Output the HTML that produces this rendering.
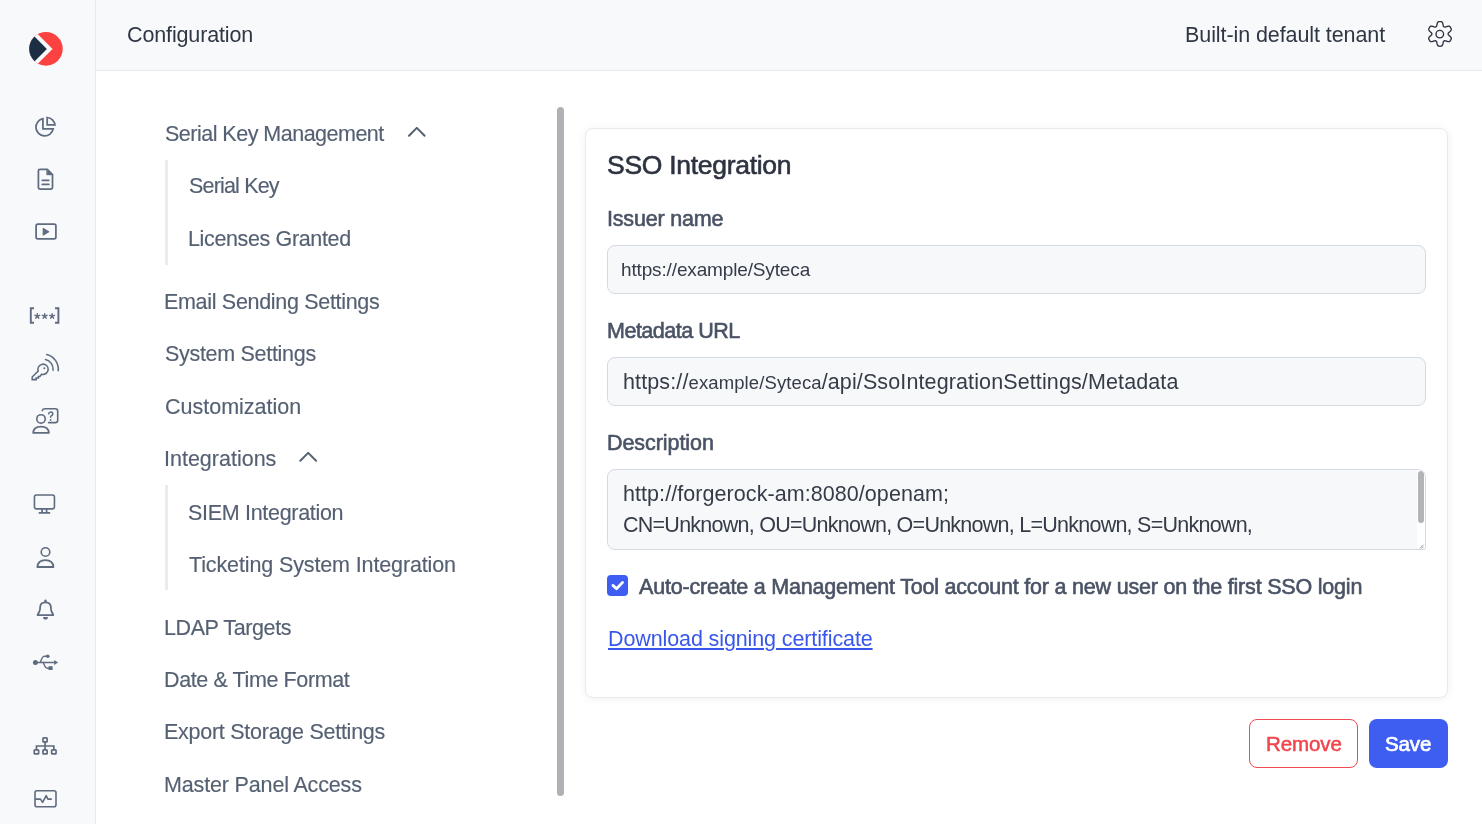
<!DOCTYPE html>
<html>
<head>
<meta charset="utf-8">
<style>
*{box-sizing:border-box;margin:0;padding:0}
html,body{width:1482px;height:824px;overflow:hidden;background:#fff;font-family:"Liberation Sans",sans-serif}
.t{position:absolute;white-space:nowrap;will-change:transform}
#side{position:absolute;left:0;top:0;width:96px;height:824px;background:#f8f9fb;border-right:1px solid #e6e9ee}
#head{position:absolute;left:96px;top:0;width:1386px;height:71px;background:#f8f9fb;border-bottom:1px solid #e6e9ee}
.ht{color:#2f3744}
.nav{color:#556072;-webkit-text-stroke:0.15px #556072}
.sub{position:absolute;left:165px;width:3px;background:#e8ebf1}
#scroll{position:absolute;left:557px;top:107px;width:7px;height:689px;border-radius:3.5px;background:#b0b1b5}
#card{position:absolute;left:585px;top:128px;width:863px;height:570px;border:1px solid #e8eaf0;border-radius:8px;background:#fff;box-shadow:0 1px 10px rgba(30,40,60,.06)}
.ttl{color:#2d3340;-webkit-text-stroke:0.6px #2d3340}
.lbl{color:#4a5365;-webkit-text-stroke:0.6px #4a5365}
.inp{position:absolute;left:607px;width:819px;border:1px solid #d5dae2;border-radius:8px;background:#f7f8fa}
.itx{color:#353c48}
.itx2{color:#353c48}
.sm{font-size:0.86em}
.lnk{color:#3857ea;text-decoration:underline;text-decoration-thickness:1.5px;text-underline-offset:2px}
.btn{position:absolute;top:719px;height:49px;border-radius:8px}
.brm{color:#f0444c;-webkit-text-stroke:0.5px #f0444c}
.bsv{color:#fff;-webkit-text-stroke:0.7px #fff}
svg{position:absolute;overflow:visible}
</style>
</head>
<body>
<div id="side"></div>
<div id="head"></div>
<div class="sub" style="top:160px;height:105px"></div>
<div class="sub" style="top:485px;height:105px"></div>
<div id="scroll"></div>
<div id="card"></div>
<div class="inp" style="top:245px;height:49px"></div>
<div class="inp" style="top:357px;height:49px"></div>
<div class="inp" style="top:469px;height:81px;overflow:hidden;border-bottom-right-radius:2px"><div style="position:absolute;right:0;top:0;width:8px;height:79px;background:#fff"></div><div style="position:absolute;right:1px;top:1px;width:6px;height:52px;border-radius:3px;background:#b3b4b8"></div></div>
<svg width="1482" height="824" style="left:0;top:0;z-index:3"><path d="M1423.5 544.8 L1419.8 548.5 M1423.5 546.8 L1421.8 548.5" stroke="#777" stroke-width="0.8"/></svg>
<div style="position:absolute;left:607px;top:575px;width:21px;height:21px;border-radius:4px;background:#3d5ef1"></div>
<div class="btn" style="left:1249px;width:109px;border:1px solid #f04a52;background:#fff"></div>
<div class="btn" style="left:1369px;width:79px;background:#3d5ef1"></div>
<svg width="1482" height="824" style="left:0;top:0;z-index:2" viewBox="0 0 1482 824">
<clipPath id="lc"><circle cx="45.95" cy="48.85" r="16.8"/></clipPath>
<g clip-path="url(#lc)">
<rect x="28" y="31" width="36" height="36" fill="#fc4141"/>
<polygon points="52.6,48.9 36.9,33.2 20,33.2 20,64.6 36.9,64.6" fill="#f8f9fb"/>
<polygon points="46.9,48.9 29,31 20,31 20,67 29,67" fill="#1b2e44"/>
</g>
<g fill="none" stroke="#5f6b7f" stroke-width="1.75" stroke-linejoin="round" stroke-linecap="round"><path d="M42.9 118.7 V128.9 H53.2 A8.7 8.7 0 1 1 42.9 118.7 Z" stroke-linejoin="miter" stroke-linecap="butt"/><path d="M47.2 117.5 V124.9 H55 A8.5 8.5 0 0 0 47.2 117.5 Z" stroke-linejoin="miter" stroke-linecap="butt"/><path d="M47.3 169.4 H40 Q38.4 169.4 38.4 171 V187.4 Q38.4 189 40 189 H50.9 Q52.5 189 52.5 187.4 V174.6 Z"/><path d="M47.2 169.2 L52.7 174.7 H47.2 Z" fill="#5f6b7f" stroke-width="1"/><path d="M42.3 180.3 H48.8 M42.3 184.4 H48.8"/><rect x="36.1" y="224" width="19.8" height="14.8" rx="1.8"/><path d="M43.2 228.4 L48.7 231.7 L43.2 235 Z" fill="#5f6b7f" stroke-width="1.1"/><path d="M34 308.2 H30.8 V322.8 H34 M55 308.2 H58.4 V322.8 H55" stroke-width="1.9" stroke-linecap="butt" stroke-linejoin="miter"/></g>
<path d="M37.30 316.10 L37.30 313.60 M37.30 316.10 L39.68 315.33 M37.30 316.10 L38.77 318.12 M37.30 316.10 L35.83 318.12 M37.30 316.10 L34.92 315.33 " stroke="#5f6b7f" stroke-width="1.45" stroke-linecap="round" fill="none"/>
<path d="M44.70 316.10 L44.70 313.60 M44.70 316.10 L47.08 315.33 M44.70 316.10 L46.17 318.12 M44.70 316.10 L43.23 318.12 M44.70 316.10 L42.32 315.33 " stroke="#5f6b7f" stroke-width="1.45" stroke-linecap="round" fill="none"/>
<path d="M52.10 316.10 L52.10 313.60 M52.10 316.10 L54.48 315.33 M52.10 316.10 L53.57 318.12 M52.10 316.10 L50.63 318.12 M52.10 316.10 L49.72 315.33 " stroke="#5f6b7f" stroke-width="1.45" stroke-linecap="round" fill="none"/>
<g fill="none" stroke="#5f6b7f" stroke-width="1.6" stroke-linejoin="round" stroke-linecap="round"><path d="M46.74 354.45 A15.25 15.25 0 0 1 58.24 370.58"/><path d="M45.49 359.45 A10.1 10.1 0 0 1 53.11 370.13"/><path d="M41.6 374.2 A5.15 5.15 0 1 0 38.2 371.0 L32.2 377.0 V379.6 H36.2 V377.9 H38.4 V376.4 H39.9 Z" stroke-linejoin="miter" stroke-width="1.55"/><circle cx="44.3" cy="368.2" r="1" fill="#5f6b7f" stroke="none"/><circle cx="41" cy="418.9" r="4.2"/><path d="M33.2 432.8 Q33.6 426.6 41 426.6 Q48.4 426.6 48.9 432.8 Z" stroke-width="1.8"/><path d="M42.3 410.6 Q42.9 408.8 45 408.8 H55.2 Q57.7 408.8 57.7 411.3 V420.2 Q57.7 422.6 55.2 422.6 H48.5"/><path d="M48.6 413.8 Q48.9 411.9 50.8 411.9 Q52.8 411.9 52.8 413.8 Q52.8 415.2 51.3 415.9 Q50.6 416.3 50.6 417.3" stroke-width="1.5"/><circle cx="50.6" cy="420" r="0.9" fill="#5f6b7f" stroke="none"/><rect x="34.45" y="495.05" width="20" height="13.8" rx="2"/><path d="M42.1 509 V512.5 M46.6 509 V512.5 M39.4 512.9 H49.5" stroke-width="1.7"/><circle cx="45.5" cy="552" r="4.3"/><path d="M37.4 567 Q37.8 560.1 45.4 560.1 Q53 560.1 53.4 567 Z" stroke-width="1.8"/><path d="M37.5 615 H53.3 L51.6 611.5 Q50.9 610 50.9 608 V607.5 Q50.9 602.3 45.5 602.3 Q40.1 602.3 40.1 607.5 V608 Q40.1 610 39.4 611.5 Z" stroke-width="1.75"/><path d="M45.5 600.8 V601.8" stroke-width="2.4"/><path d="M43.1 617.0 H47.9 A2.4 2.6 0 0 1 43.1 617.0 Z" fill="#5f6b7f" stroke="none"/><circle cx="35.4" cy="662.4" r="2.5" fill="#5f6b7f" stroke="none"/><path d="M36 662.4 H55" stroke-width="1.45"/><path d="M54.2 659.9 L58.1 662.4 L54.2 664.9 Z" fill="#5f6b7f" stroke="none"/><path d="M40.5 662.3 Q42.2 656.3 44.4 656.3 H47.5" stroke-width="1.45"/><circle cx="47.8" cy="656.3" r="1.8" fill="#5f6b7f" stroke="none"/><path d="M43.3 662.5 Q45.2 668.2 47.5 668.2 H49" stroke-width="1.45"/><rect x="48.6" y="666.2" width="4" height="3.8" fill="#5f6b7f" stroke="none"/><g stroke-width="1.7" stroke-linejoin="miter"><rect x="42.95" y="737.95" width="4.2" height="4.0" rx="0.7"/><rect x="34.25" y="749.85" width="4.4" height="4.1" rx="0.7"/><rect x="42.95" y="749.85" width="4.2" height="4.1" rx="0.7"/><rect x="51.65" y="749.85" width="4.4" height="4.1" rx="0.7"/><path d="M45.05 742 V749.85 M36.45 749.85 V746 H53.85 V749.85" stroke-linecap="butt"/></g><rect x="35" y="790.8" width="21" height="15.9" rx="2"/><path d="M35.5 799.1 H40.5 L42.6 802.4 L46.2 795.7 L47.9 799.1 H51.3" stroke-width="1.6"/></g>
<path d="M409 135.7 L416.8 127.9 L424.6 135.7" fill="none" stroke="#556072" stroke-width="2" stroke-linecap="round" stroke-linejoin="round"/>
<path d="M300.3 460.8 L308.2 452.9 L316.1 460.8" fill="none" stroke="#556072" stroke-width="2" stroke-linecap="round" stroke-linejoin="round"/>
<polygon points="1440.00,21.60 1440.11,21.60 1440.21,21.60 1440.32,21.60 1440.43,21.61 1440.54,21.61 1440.64,21.62 1440.75,21.62 1440.86,21.63 1440.97,21.64 1441.07,21.65 1441.18,21.66 1441.29,21.67 1441.39,21.68 1441.50,21.71 1441.60,21.76 1441.70,21.81 1441.80,21.88 1441.89,21.95 1441.98,22.04 1442.07,22.14 1442.16,22.25 1442.24,22.36 1442.32,22.49 1442.40,22.62 1442.47,22.77 1442.54,22.91 1442.60,23.07 1442.66,23.23 1442.72,23.39 1442.77,23.56 1442.82,23.73 1442.87,23.90 1442.91,24.07 1442.95,24.24 1442.99,24.42 1443.03,24.59 1443.06,24.75 1443.09,24.92 1443.12,25.08 1443.16,25.23 1443.19,25.38 1443.22,25.52 1443.25,25.66 1443.28,25.79 1443.31,25.91 1443.34,26.02 1443.38,26.13 1443.42,26.22 1443.46,26.31 1443.50,26.39 1443.55,26.45 1443.60,26.51 1443.66,26.56 1443.72,26.59 1443.79,26.63 1443.85,26.66 1443.91,26.69 1443.98,26.73 1444.04,26.76 1444.10,26.80 1444.16,26.83 1444.22,26.87 1444.28,26.91 1444.35,26.95 1444.41,26.98 1444.47,27.02 1444.53,27.06 1444.60,27.08 1444.67,27.10 1444.76,27.11 1444.84,27.11 1444.94,27.10 1445.04,27.09 1445.15,27.07 1445.26,27.04 1445.39,27.01 1445.51,26.97 1445.65,26.93 1445.79,26.88 1445.93,26.83 1446.08,26.78 1446.23,26.73 1446.39,26.68 1446.55,26.62 1446.72,26.57 1446.89,26.52 1447.06,26.46 1447.23,26.42 1447.40,26.37 1447.57,26.33 1447.74,26.29 1447.91,26.26 1448.08,26.23 1448.25,26.21 1448.41,26.20 1448.57,26.19 1448.72,26.18 1448.87,26.19 1449.01,26.20 1449.15,26.22 1449.28,26.25 1449.40,26.29 1449.52,26.33 1449.62,26.38 1449.72,26.44 1449.80,26.51 1449.88,26.59 1449.95,26.67 1450.01,26.76 1450.08,26.85 1450.14,26.93 1450.20,27.02 1450.26,27.11 1450.32,27.20 1450.37,27.29 1450.43,27.38 1450.49,27.47 1450.54,27.57 1450.60,27.66 1450.65,27.75 1450.71,27.84 1450.76,27.94 1450.81,28.03 1450.86,28.13 1450.91,28.22 1450.96,28.32 1451.01,28.41 1451.06,28.51 1451.10,28.60 1451.15,28.70 1451.19,28.80 1451.24,28.90 1451.27,29.00 1451.30,29.10 1451.32,29.21 1451.32,29.33 1451.31,29.44 1451.29,29.56 1451.26,29.69 1451.22,29.81 1451.17,29.94 1451.11,30.07 1451.04,30.21 1450.96,30.34 1450.88,30.47 1450.78,30.60 1450.68,30.74 1450.57,30.87 1450.46,31.00 1450.34,31.13 1450.22,31.26 1450.09,31.38 1449.97,31.51 1449.84,31.63 1449.71,31.75 1449.58,31.86 1449.45,31.98 1449.33,32.09 1449.20,32.19 1449.08,32.30 1448.97,32.40 1448.86,32.50 1448.76,32.59 1448.66,32.68 1448.57,32.77 1448.49,32.86 1448.42,32.94 1448.36,33.02 1448.30,33.10 1448.26,33.18 1448.23,33.25 1448.20,33.33 1448.19,33.40 1448.19,33.47 1448.19,33.54 1448.20,33.61 1448.20,33.69 1448.20,33.76 1448.20,33.83 1448.20,33.90 1448.20,33.97 1448.20,34.04 1448.20,34.11 1448.20,34.19 1448.19,34.26 1448.19,34.33 1448.19,34.40 1448.20,34.47 1448.23,34.55 1448.26,34.62 1448.30,34.70 1448.36,34.78 1448.42,34.86 1448.49,34.94 1448.57,35.03 1448.66,35.12 1448.76,35.21 1448.86,35.30 1448.97,35.40 1449.08,35.50 1449.20,35.61 1449.33,35.71 1449.45,35.82 1449.58,35.94 1449.71,36.05 1449.84,36.17 1449.97,36.29 1450.09,36.42 1450.22,36.54 1450.34,36.67 1450.46,36.80 1450.57,36.93 1450.68,37.06 1450.78,37.20 1450.88,37.33 1450.96,37.46 1451.04,37.59 1451.11,37.73 1451.17,37.86 1451.22,37.99 1451.26,38.11 1451.29,38.24 1451.31,38.36 1451.32,38.47 1451.32,38.59 1451.30,38.70 1451.27,38.80 1451.24,38.90 1451.19,39.00 1451.15,39.10 1451.10,39.20 1451.06,39.29 1451.01,39.39 1450.96,39.48 1450.91,39.58 1450.86,39.67 1450.81,39.77 1450.76,39.86 1450.71,39.96 1450.65,40.05 1450.60,40.14 1450.54,40.23 1450.49,40.33 1450.43,40.42 1450.37,40.51 1450.32,40.60 1450.26,40.69 1450.20,40.78 1450.14,40.87 1450.08,40.95 1450.01,41.04 1449.95,41.13 1449.88,41.21 1449.80,41.29 1449.72,41.36 1449.62,41.42 1449.52,41.47 1449.40,41.51 1449.28,41.55 1449.15,41.58 1449.01,41.60 1448.87,41.61 1448.72,41.62 1448.57,41.61 1448.41,41.60 1448.25,41.59 1448.08,41.57 1447.91,41.54 1447.74,41.51 1447.57,41.47 1447.40,41.43 1447.23,41.38 1447.06,41.34 1446.89,41.28 1446.72,41.23 1446.55,41.18 1446.39,41.12 1446.23,41.07 1446.08,41.02 1445.93,40.97 1445.79,40.92 1445.65,40.87 1445.51,40.83 1445.39,40.79 1445.26,40.76 1445.15,40.73 1445.04,40.71 1444.94,40.70 1444.84,40.69 1444.76,40.69 1444.67,40.70 1444.60,40.72 1444.53,40.74 1444.47,40.78 1444.41,40.82 1444.35,40.85 1444.28,40.89 1444.22,40.93 1444.16,40.97 1444.10,41.00 1444.04,41.04 1443.98,41.07 1443.91,41.11 1443.85,41.14 1443.79,41.17 1443.72,41.21 1443.66,41.24 1443.60,41.29 1443.55,41.35 1443.50,41.41 1443.46,41.49 1443.42,41.58 1443.38,41.67 1443.34,41.78 1443.31,41.89 1443.28,42.01 1443.25,42.14 1443.22,42.28 1443.19,42.42 1443.16,42.57 1443.12,42.72 1443.09,42.88 1443.06,43.05 1443.03,43.21 1442.99,43.38 1442.95,43.56 1442.91,43.73 1442.87,43.90 1442.82,44.07 1442.77,44.24 1442.72,44.41 1442.66,44.57 1442.60,44.73 1442.54,44.89 1442.47,45.03 1442.40,45.18 1442.32,45.31 1442.24,45.44 1442.16,45.55 1442.07,45.66 1441.98,45.76 1441.89,45.85 1441.80,45.92 1441.70,45.99 1441.60,46.04 1441.50,46.09 1441.39,46.12 1441.29,46.13 1441.18,46.14 1441.07,46.15 1440.97,46.16 1440.86,46.17 1440.75,46.18 1440.64,46.18 1440.54,46.19 1440.43,46.19 1440.32,46.20 1440.21,46.20 1440.11,46.20 1440.00,46.20 1439.89,46.20 1439.79,46.20 1439.68,46.20 1439.57,46.19 1439.46,46.19 1439.36,46.18 1439.25,46.18 1439.14,46.17 1439.03,46.16 1438.93,46.15 1438.82,46.14 1438.71,46.13 1438.61,46.12 1438.50,46.09 1438.40,46.04 1438.30,45.99 1438.20,45.92 1438.11,45.85 1438.02,45.76 1437.93,45.66 1437.84,45.55 1437.76,45.44 1437.68,45.31 1437.60,45.18 1437.53,45.03 1437.46,44.89 1437.40,44.73 1437.34,44.57 1437.28,44.41 1437.23,44.24 1437.18,44.07 1437.13,43.90 1437.09,43.73 1437.05,43.56 1437.01,43.38 1436.97,43.21 1436.94,43.05 1436.91,42.88 1436.88,42.72 1436.84,42.57 1436.81,42.42 1436.78,42.28 1436.75,42.14 1436.72,42.01 1436.69,41.89 1436.66,41.78 1436.62,41.67 1436.58,41.58 1436.54,41.49 1436.50,41.41 1436.45,41.35 1436.40,41.29 1436.34,41.24 1436.28,41.21 1436.21,41.17 1436.15,41.14 1436.09,41.11 1436.02,41.07 1435.96,41.04 1435.90,41.00 1435.84,40.97 1435.78,40.93 1435.72,40.89 1435.65,40.85 1435.59,40.82 1435.53,40.78 1435.47,40.74 1435.40,40.72 1435.33,40.70 1435.24,40.69 1435.16,40.69 1435.06,40.70 1434.96,40.71 1434.85,40.73 1434.74,40.76 1434.61,40.79 1434.49,40.83 1434.35,40.87 1434.21,40.92 1434.07,40.97 1433.92,41.02 1433.77,41.07 1433.61,41.12 1433.45,41.18 1433.28,41.23 1433.11,41.28 1432.94,41.34 1432.77,41.38 1432.60,41.43 1432.43,41.47 1432.26,41.51 1432.09,41.54 1431.92,41.57 1431.75,41.59 1431.59,41.60 1431.43,41.61 1431.28,41.62 1431.13,41.61 1430.99,41.60 1430.85,41.58 1430.72,41.55 1430.60,41.51 1430.48,41.47 1430.38,41.42 1430.28,41.36 1430.20,41.29 1430.12,41.21 1430.05,41.13 1429.99,41.04 1429.92,40.95 1429.86,40.87 1429.80,40.78 1429.74,40.69 1429.68,40.60 1429.63,40.51 1429.57,40.42 1429.51,40.33 1429.46,40.23 1429.40,40.14 1429.35,40.05 1429.29,39.96 1429.24,39.86 1429.19,39.77 1429.14,39.67 1429.09,39.58 1429.04,39.48 1428.99,39.39 1428.94,39.29 1428.90,39.20 1428.85,39.10 1428.81,39.00 1428.76,38.90 1428.73,38.80 1428.70,38.70 1428.68,38.59 1428.68,38.47 1428.69,38.36 1428.71,38.24 1428.74,38.11 1428.78,37.99 1428.83,37.86 1428.89,37.73 1428.96,37.59 1429.04,37.46 1429.12,37.33 1429.22,37.20 1429.32,37.06 1429.43,36.93 1429.54,36.80 1429.66,36.67 1429.78,36.54 1429.91,36.42 1430.03,36.29 1430.16,36.17 1430.29,36.05 1430.42,35.94 1430.55,35.82 1430.67,35.71 1430.80,35.61 1430.92,35.50 1431.03,35.40 1431.14,35.30 1431.24,35.21 1431.34,35.12 1431.43,35.03 1431.51,34.94 1431.58,34.86 1431.64,34.78 1431.70,34.70 1431.74,34.62 1431.77,34.55 1431.80,34.47 1431.81,34.40 1431.81,34.33 1431.81,34.26 1431.80,34.19 1431.80,34.11 1431.80,34.04 1431.80,33.97 1431.80,33.90 1431.80,33.83 1431.80,33.76 1431.80,33.69 1431.80,33.61 1431.81,33.54 1431.81,33.47 1431.81,33.40 1431.80,33.33 1431.77,33.25 1431.74,33.18 1431.70,33.10 1431.64,33.02 1431.58,32.94 1431.51,32.86 1431.43,32.77 1431.34,32.68 1431.24,32.59 1431.14,32.50 1431.03,32.40 1430.92,32.30 1430.80,32.19 1430.67,32.09 1430.55,31.98 1430.42,31.86 1430.29,31.75 1430.16,31.63 1430.03,31.51 1429.91,31.38 1429.78,31.26 1429.66,31.13 1429.54,31.00 1429.43,30.87 1429.32,30.74 1429.22,30.60 1429.12,30.47 1429.04,30.34 1428.96,30.21 1428.89,30.07 1428.83,29.94 1428.78,29.81 1428.74,29.69 1428.71,29.56 1428.69,29.44 1428.68,29.33 1428.68,29.21 1428.70,29.10 1428.73,29.00 1428.76,28.90 1428.81,28.80 1428.85,28.70 1428.90,28.60 1428.94,28.51 1428.99,28.41 1429.04,28.32 1429.09,28.22 1429.14,28.13 1429.19,28.03 1429.24,27.94 1429.29,27.84 1429.35,27.75 1429.40,27.66 1429.46,27.57 1429.51,27.47 1429.57,27.38 1429.63,27.29 1429.68,27.20 1429.74,27.11 1429.80,27.02 1429.86,26.93 1429.92,26.85 1429.99,26.76 1430.05,26.67 1430.12,26.59 1430.20,26.51 1430.28,26.44 1430.38,26.38 1430.48,26.33 1430.60,26.29 1430.72,26.25 1430.85,26.22 1430.99,26.20 1431.13,26.19 1431.28,26.18 1431.43,26.19 1431.59,26.20 1431.75,26.21 1431.92,26.23 1432.09,26.26 1432.26,26.29 1432.43,26.33 1432.60,26.37 1432.77,26.42 1432.94,26.46 1433.11,26.52 1433.28,26.57 1433.45,26.62 1433.61,26.68 1433.77,26.73 1433.92,26.78 1434.07,26.83 1434.21,26.88 1434.35,26.93 1434.49,26.97 1434.61,27.01 1434.74,27.04 1434.85,27.07 1434.96,27.09 1435.06,27.10 1435.16,27.11 1435.24,27.11 1435.33,27.10 1435.40,27.08 1435.47,27.06 1435.53,27.02 1435.59,26.98 1435.65,26.95 1435.72,26.91 1435.78,26.87 1435.84,26.83 1435.90,26.80 1435.96,26.76 1436.02,26.73 1436.09,26.69 1436.15,26.66 1436.21,26.63 1436.28,26.59 1436.34,26.56 1436.40,26.51 1436.45,26.45 1436.50,26.39 1436.54,26.31 1436.58,26.22 1436.62,26.13 1436.66,26.02 1436.69,25.91 1436.72,25.79 1436.75,25.66 1436.78,25.52 1436.81,25.38 1436.84,25.23 1436.88,25.08 1436.91,24.92 1436.94,24.75 1436.97,24.59 1437.01,24.42 1437.05,24.24 1437.09,24.07 1437.13,23.90 1437.18,23.73 1437.23,23.56 1437.28,23.39 1437.34,23.23 1437.40,23.07 1437.46,22.91 1437.53,22.77 1437.60,22.62 1437.68,22.49 1437.76,22.36 1437.84,22.25 1437.93,22.14 1438.02,22.04 1438.11,21.95 1438.20,21.88 1438.30,21.81 1438.40,21.76 1438.50,21.71 1438.61,21.68 1438.71,21.67 1438.82,21.66 1438.93,21.65 1439.03,21.64 1439.14,21.63 1439.25,21.62 1439.36,21.62 1439.46,21.61 1439.57,21.61 1439.68,21.60 1439.79,21.60 1439.89,21.60" fill="none" stroke="#2b3240" stroke-width="1.35" stroke-linejoin="round"/><circle cx="1439.8" cy="34.1" r="3.8" fill="none" stroke="#2b3240" stroke-width="1.35"/>
<path d="M612.9 585.4 L616.5 588.7 L622.6 582.4" fill="none" stroke="#fff" stroke-width="2.8" stroke-linecap="round" stroke-linejoin="round"/>
</svg>
<div id="cfg" class="t ht" style="left:127.10px;top:21.90px;font-size:21.5px;line-height:26px;letter-spacing:-0.133px">Configuration</div>
<div id="ten" class="t ht" style="left:1184.50px;top:21.70px;font-size:21.5px;line-height:26px;letter-spacing:-0.082px">Built-in default tenant</div>
<div id="n1" class="t nav" style="left:164.50px;top:120.90px;font-size:21.5px;line-height:26px;letter-spacing:-0.510px">Serial Key Management</div>
<div id="n2" class="t nav" style="left:188.90px;top:173.10px;font-size:21.5px;line-height:26px;letter-spacing:-0.822px">Serial Key</div>
<div id="n3" class="t nav" style="left:188.40px;top:225.70px;font-size:21.5px;line-height:26px;letter-spacing:-0.360px">Licenses Granted</div>
<div id="n4" class="t nav" style="left:164.30px;top:289.10px;font-size:21.5px;line-height:26px;letter-spacing:-0.314px">Email Sending Settings</div>
<div id="n5" class="t nav" style="left:165.30px;top:341.00px;font-size:21.5px;line-height:26px;letter-spacing:-0.300px">System Settings</div>
<div id="n6" class="t nav" style="left:165.30px;top:394.00px;font-size:21.5px;line-height:26px;letter-spacing:-0.000px">Customization</div>
<div id="n7" class="t nav" style="left:164.10px;top:446.10px;font-size:21.5px;line-height:26px;letter-spacing:0.000px">Integrations</div>
<div id="n8" class="t nav" style="left:188.40px;top:499.60px;font-size:21.5px;line-height:26px;letter-spacing:-0.307px">SIEM Integration</div>
<div id="n9" class="t nav" style="left:189.40px;top:552.00px;font-size:21.5px;line-height:26px;letter-spacing:-0.126px">Ticketing System Integration</div>
<div id="n10" class="t nav" style="left:164.30px;top:614.50px;font-size:21.5px;line-height:26px;letter-spacing:-0.400px">LDAP Targets</div>
<div id="n11" class="t nav" style="left:164.30px;top:667.00px;font-size:21.5px;line-height:26px;letter-spacing:-0.388px">Date &amp; Time Format</div>
<div id="n12" class="t nav" style="left:164.30px;top:719.20px;font-size:21.5px;line-height:26px;letter-spacing:-0.264px">Export Storage Settings</div>
<div id="n13" class="t nav" style="left:164.30px;top:771.60px;font-size:21.5px;line-height:26px;letter-spacing:-0.156px">Master Panel Access</div>
<div id="sso" class="t ttl" style="left:606.60px;top:149.00px;font-size:26.5px;line-height:32px;letter-spacing:-0.286px">SSO Integration</div>
<div id="l1" class="t lbl" style="left:606.80px;top:206.00px;font-size:21.5px;line-height:26px;letter-spacing:-0.180px">Issuer name</div>
<div id="v1" class="t itx2" style="left:620.50px;top:258.00px;font-size:19px;line-height:23px;letter-spacing:-0.143px">https://example/Syteca</div>
<div id="l2" class="t lbl" style="left:606.90px;top:318.00px;font-size:21.5px;line-height:26px;letter-spacing:-0.491px">Metadata URL</div>
<div id="v2" class="t itx" style="left:623.10px;top:369.00px;font-size:21.5px;line-height:26px;letter-spacing:0.119px">https://<span class="sm">example/Syteca</span>/api/SsoIntegrationSettings/Metadata</div>
<div id="l3" class="t lbl" style="left:607.00px;top:430.00px;font-size:21.5px;line-height:26px;letter-spacing:-0.060px">Description</div>
<div id="d1" class="t itx" style="left:623.10px;top:480.80px;font-size:21.5px;line-height:26px;letter-spacing:0.065px">http://forgerock-am:8080/openam;</div>
<div id="d2" class="t itx" style="left:623.10px;top:511.90px;font-size:21.5px;line-height:26px;letter-spacing:-0.749px">CN=Unknown, OU=Unknown, O=Unknown, L=Unknown, S=Unknown,</div>
<div id="auto" class="t lbl" style="left:638.70px;top:573.70px;font-size:21.5px;line-height:26px;letter-spacing:-0.200px">Auto-create a Management Tool account for a new user on the first SSO login</div>
<div id="dl" class="t lnk" style="left:607.60px;top:625.70px;font-size:21.5px;line-height:26px;letter-spacing:-0.111px">Download signing certificate</div>
<div id="rm" class="t brm" style="left:1265.80px;top:730.80px;font-size:20.5px;line-height:25px;letter-spacing:-0.080px">Remove</div>
<div id="sv" class="t bsv" style="left:1385.40px;top:730.80px;font-size:20.5px;line-height:25px;letter-spacing:-0.133px">Save</div>
</body>
</html>
